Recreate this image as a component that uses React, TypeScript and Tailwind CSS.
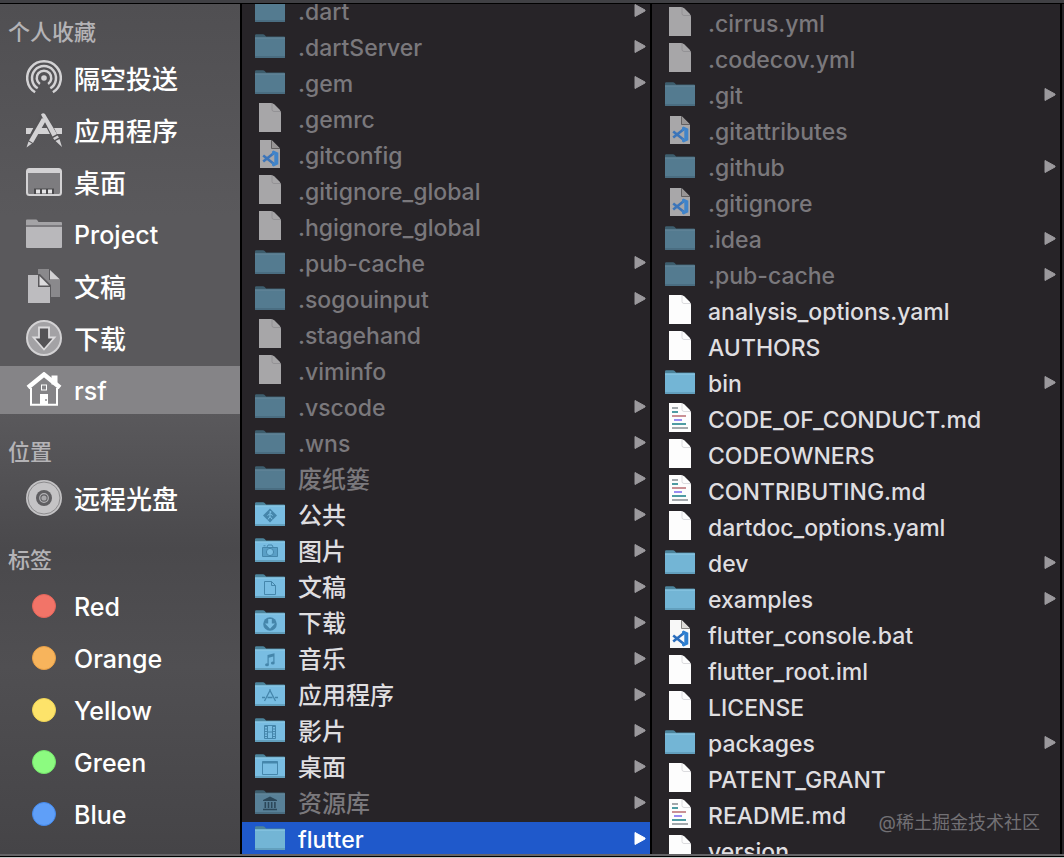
import React from "react";
import clsx from "clsx";

type IconKind = "folder" | "doc" | "code" | "markdown";
type Glyph =
  | "public"
  | "pictures"
  | "documents"
  | "downloads"
  | "music"
  | "apps"
  | "movies"
  | "desktop"
  | "library";

interface Entry {
  name: string;
  icon: IconKind;
  glyph?: Glyph;
  dim?: boolean;
  selected?: boolean;
}

const homeEntries: Entry[] = [
  { name: ".dart", icon: "folder", dim: true },
  { name: ".dartServer", icon: "folder", dim: true },
  { name: ".gem", icon: "folder", dim: true },
  { name: ".gemrc", icon: "doc", dim: true },
  { name: ".gitconfig", icon: "code", dim: true },
  { name: ".gitignore_global", icon: "doc", dim: true },
  { name: ".hgignore_global", icon: "doc", dim: true },
  { name: ".pub-cache", icon: "folder", dim: true },
  { name: ".sogouinput", icon: "folder", dim: true },
  { name: ".stagehand", icon: "doc", dim: true },
  { name: ".viminfo", icon: "doc", dim: true },
  { name: ".vscode", icon: "folder", dim: true },
  { name: ".wns", icon: "folder", dim: true },
  { name: "废纸篓", icon: "folder", dim: true },
  { name: "公共", icon: "folder", glyph: "public" },
  { name: "图片", icon: "folder", glyph: "pictures" },
  { name: "文稿", icon: "folder", glyph: "documents" },
  { name: "下载", icon: "folder", glyph: "downloads" },
  { name: "音乐", icon: "folder", glyph: "music" },
  { name: "应用程序", icon: "folder", glyph: "apps" },
  { name: "影片", icon: "folder", glyph: "movies" },
  { name: "桌面", icon: "folder", glyph: "desktop" },
  { name: "资源库", icon: "folder", glyph: "library", dim: true },
  { name: "flutter", icon: "folder", selected: true },
];

const flutterEntries: Entry[] = [
  { name: ".cirrus.yml", icon: "doc", dim: true },
  { name: ".codecov.yml", icon: "doc", dim: true },
  { name: ".git", icon: "folder", dim: true },
  { name: ".gitattributes", icon: "code", dim: true },
  { name: ".github", icon: "folder", dim: true },
  { name: ".gitignore", icon: "code", dim: true },
  { name: ".idea", icon: "folder", dim: true },
  { name: ".pub-cache", icon: "folder", dim: true },
  { name: "analysis_options.yaml", icon: "doc" },
  { name: "AUTHORS", icon: "doc" },
  { name: "bin", icon: "folder" },
  { name: "CODE_OF_CONDUCT.md", icon: "markdown" },
  { name: "CODEOWNERS", icon: "doc" },
  { name: "CONTRIBUTING.md", icon: "markdown" },
  { name: "dartdoc_options.yaml", icon: "doc" },
  { name: "dev", icon: "folder" },
  { name: "examples", icon: "folder" },
  { name: "flutter_console.bat", icon: "code" },
  { name: "flutter_root.iml", icon: "doc" },
  { name: "LICENSE", icon: "doc" },
  { name: "packages", icon: "folder" },
  { name: "PATENT_GRANT", icon: "doc" },
  { name: "README.md", icon: "markdown" },
  { name: "version", icon: "doc" },
];

const isLatin = (text: string) => /^[\x20-\x7e]+$/.test(text);

function FolderGlyph({ glyph }: { glyph: Glyph }) {
  switch (glyph) {
    case "public":
      return (
        <>
          <path d="M15 10.5 22 17.5 15 24.5 8 17.5Z" fill="#4586ab" />
          <circle cx="15.4" cy="14" r="1" fill="#7cc0e4" />
          <path
            d="M15 15.5v3l-2 3M15 18.5l2.2 2.8M12.5 17.5l2.5-1.8 2.7 1.8"
            stroke="#7cc0e4"
            fill="none"
          />
        </>
      );
    case "pictures":
      return (
        <g fill="none" stroke="#4586ab">
          <path d="M7.5 13.5h15v9h-15z" fill="#5a9fc6" />
          <path d="M12 13l1-2h4l1 2M8.5 11.8h2" />
          <circle cx="15" cy="18" r="3.6" fill="#7cc0e4" />
        </g>
      );
    case "documents":
      return (
        <path
          d="M9.5 11.5h7l4 4v9h-11zM16.5 11.5v4h4"
          fill="none"
          stroke="#4586ab"
        />
      );
    case "downloads":
      return (
        <>
          <circle cx="15" cy="18" r="6.8" fill="#4586ab" />
          <path d="M13.2 13h3.6v4.500h3.200L15 22.800 10 17.500h3.200z" fill="#7cc0e4" />
        </>
      );
    case "music":
      return (
        <g fill="#4586ab">
          <path d="M12.500 13l7-1.800v9.300h-1.200v-6l-4.600 1.200v7h-1.200z" />
          <ellipse cx="12" cy="22.800" rx="1.900" ry="1.500" />
          <ellipse cx="17.800" cy="21" rx="1.900" ry="1.500" />
        </g>
      );
    case "apps":
      return (
        <path
          d="M15.500 11.500 9.500 23M14.500 11.500l6 11.500M7 19.500h3M12.500 19.500h5M20 19.500h3"
          stroke="#4586ab"
          strokeWidth="1.300"
          fill="none"
        />
      );
    case "movies":
      return (
        <g fill="none" stroke="#4586ab">
          <path d="M9.500 11.500h11v13h-11zM12.500 11.500v13M17.500 11.500v13M12.500 18h5" />
          <path d="M11 12v12M19 12v12" strokeWidth="2" strokeDasharray="1 1.500" />
        </g>
      );
    case "desktop":
      return (
        <g fill="none" stroke="#4586ab">
          <path d="M7.500 11.500h15v13h-15z" />
          <path d="M7.500 12.500h15" strokeWidth="2" />
        </g>
      );
    case "library":
      return (
        <g fill="#2f5f79">
          <path d="M15 10.500l7 3.500v1H8v-1zM8 22.800h14v1.500H8z" />
          <path d="M9.500 16h1.600v6H9.500zM12.700 16h1.600v6h-1.600zM15.900 16h1.600v6h-1.600zM19.100 16h1.600v6h-1.600z" />
        </g>
      );
  }
}

function FolderIcon({ glyph }: { glyph?: Glyph }) {
  return (
    <>
      <path
        d="M0 27V5.500Q0 4.300 1.200 4.300H8Q9 4.300 9.700 5L10.600 6Q11 6.500 12 6.500H29Q30 6.500 30 7.500V27Z"
        fill="#4c849c"
      />
      <path
        d="M0 7.500h30V27q0 1-1 1H1q-1 0-1-1z"
        fill={glyph ? "#79bde2" : "#73b5d5"}
      />
      <path d="M0 7.500h30v1H0z" fill="#90cae6" />
      <path d="M0 26h30v1q0 1-1 1H1q-1 0-1-1z" fill="#629fbd" />
      {glyph && <FolderGlyph glyph={glyph} />}
    </>
  );
}

function DocIcon({ lined }: { lined?: boolean }) {
  return (
    <>
      <path d="M4 1h12q2 0 3.500 1.500L24.500 7.500Q26 9 26 11v19H4z" fill="#fdfdfd" />
      <path d="M17 1.500v6q0 2 2 2h6.500" fill="none" stroke="#d2d2d5" strokeWidth=".8" />
      {lined && (
        <g strokeWidth="1.800">
          <path d="M7 6h6M7 26h16" stroke="#a3a8ac" />
          <path d="M7 10h6M7 22h14" stroke="#4f9ca3" />
          <path d="M7 14h14" stroke="#c4848a" />
          <path d="M9 18h8" stroke="#8f7ff0" />
        </g>
      )}
    </>
  );
}

function CodeIcon({ dim }: { dim?: boolean }) {
  return (
    <>
      <g opacity={dim ? 0.62 : 1}>
        <path d="M5 2h11.500L25 10.500V30H5z" fill="#f8f8f8" />
        <path d="M16.500 2 25 10.500h-8.500z" fill="#dddbd8" />
        <path d="M16.500 2v8.500H25" fill="none" stroke="#7d7b78" strokeWidth=".9" />
      </g>
      <g opacity={dim ? 0.85 : 1}>
        <path
          d="M8.200 17.400 19 26M8.200 23.600 19 15"
          stroke="#2a6dbd"
          strokeWidth="2.600"
          fill="none"
        />
        <path d="M18.500 12.600 23.300 14.800v11.400l-4.800 2.200-1.500-1V24l2.300 1V16L17 17.200V13.600z" fill="#2f7fd0" />
      </g>
    </>
  );
}

function EntryIcon({ entry }: { entry: Entry }) {
  return (
    <svg
      viewBox="0 0 30 36"
      className={clsx(
        "h-9 w-[30px] shrink-0",
        entry.dim && entry.icon !== "code" && "opacity-60"
      )}
      aria-hidden="true"
    >
      {entry.icon === "folder" && <FolderIcon glyph={entry.glyph} />}
      {entry.icon === "doc" && <DocIcon />}
      {entry.icon === "markdown" && <DocIcon lined />}
      {entry.icon === "code" && <CodeIcon dim={entry.dim} />}
    </svg>
  );
}

function EntryRow({ entry }: { entry: Entry }) {
  return (
    <li>
      <button
        type="button"
        className={clsx(
          "flex h-9 w-full items-center gap-[13px] pr-1 pl-[13px] text-left font-medium",
          entry.selected && "bg-[#1f59cb] text-white",
          !entry.selected && (entry.dim ? "text-[#7a787c]" : "text-[#dfdee0]")
        )}
      >
        <EntryIcon entry={entry} />
        <span
          className={clsx(
            "flex-1 whitespace-nowrap",
            isLatin(entry.name) ? "text-[23px]" : "text-[24px]"
          )}
        >
          {entry.name}
        </span>
        {entry.icon === "folder" && (
          <svg viewBox="0 0 12 36" className="h-9 w-3 shrink-0" aria-hidden="true">
            <path
              d="M1 10.500 11 16 11 17 1 22.500Z"
              fill={entry.selected ? "#ffffff" : "#9b999d"}
              stroke={entry.selected ? "#ffffff" : "#9b999d"}
              strokeLinejoin="round"
            />
          </svg>
        )}
      </button>
    </li>
  );
}

function SidebarIcon({ children }: { children: React.ReactNode }) {
  return (
    <svg viewBox="0 0 36 36" className="size-9 shrink-0" aria-hidden="true">
      {children}
    </svg>
  );
}

const airdropIcon = (
  <g fill="none" stroke="#d3d2d4" strokeWidth="2.500">
    <path d="M9.100 32.300A16.800 16.800 0 1 1 26.900 32.300" />
    <path d="M11.700 28.300A12 12 0 1 1 24.300 28.300" />
    <path d="M13.900 24A7.300 7.300 0 1 1 22.100 24" />
    <circle cx="18" cy="18" r="2.800" fill="#d3d2d4" stroke="none" />
  </g>
);

const appsIcon = (
  <g fill="#d3d2d4">
    <path d="M0 16h8l-3 6H0zM14 16h9l3 6H11zM28 16h8v6h-5z" />
    <g fill="none" stroke="#545356" strokeWidth="6">
      <path d="M17 4 4 29M17 2l14 27" />
    </g>
    <path d="M16 6l4 2.500L7 31l-4-2.500zM2.500 29.500l3.500 2L.5 35.500z" />
    <path d="M15 2.500q2-2 4-.5L31 22l-4.500 2.500zM27 26l4.500-2.500 1.500 2-4.500 2.500zM29.500 29l4-2 2.500 8z" />
  </g>
);

const desktopIcon = (
  <>
    <rect x="1" y="5" width="34" height="26" rx="2.500" fill="#7d7c7f" stroke="#d3d2d4" strokeWidth="2" />
    <path d="M1 7.500h34" stroke="#d3d2d4" strokeWidth="3" />
    <path d="M8 24.500h20V30H8z" fill="#4b4a4d" />
    <path d="M10 25.500h4v4h-4zM16 25.500h4v4h-4zM22 25.500h4v4h-4z" fill="#e3e2e4" />
  </>
);

const folderIcon = (
  <>
    <path d="M0 10V4.500Q0 3.500 1 3.500h9q1 0 1.500 1l1 1.500H35q1 0 1 1v3z" fill="#a4a3a6" />
    <path d="M0 10.500h36V31q0 1-1 1H1q-1 0-1-1z" fill="#b9b8bb" />
    <path d="M0 9.800h36" stroke="#6e6d70" strokeWidth="1.200" />
  </>
);

const documentsIcon = (
  <>
    <path d="M12 1h11v11h11v17H25V17L14 6h-2z" fill="#8a898c" />
    <path d="M24 2v9.500h10z" fill="#d3d2d4" />
    <path d="M2 7h10v12h12v16H2z" fill="#bdbcbf" />
    <path d="M13.500 8v9.500h9.500z" fill="#dddcde" />
  </>
);

const downloadsIcon = (
  <>
    <circle cx="18" cy="18" r="17" fill="#a3a2a5" stroke="#d3d2d4" strokeWidth="2" />
    <path
      d="M13 7.500h10v10h5.500L18 29.500 7.500 17.500H13z"
      fill="#545356"
      stroke="#dcdbdd"
      strokeWidth="1.800"
    />
  </>
);

const homeIcon = (
  <>
    <path d="M25.500 3.500h6v9h-6z" fill="#ffffff" />
    <path d="M5 16v16.800h26V16" fill="none" stroke="#ffffff" strokeWidth="2" />
    <path d="M2 15.500 18 2.500l16 13" fill="none" stroke="#ffffff" strokeWidth="4.500" />
    <rect x="15.500" y="13" width="5" height="5" fill="none" stroke="#ffffff" />
    <path d="M14 22h8v11h-8z" fill="#ffffff" />
    <circle cx="20" cy="28" r="1" fill="#8a898c" />
  </>
);

const discIcon = (
  <>
    <circle cx="18" cy="18" r="18" fill="#c4c3c5" />
    <circle cx="18" cy="18" r="16" fill="none" stroke="#8c8b8d" />
    <circle cx="18" cy="18" r="8" fill="#5f5e61" />
    <circle cx="18" cy="18" r="4.300" fill="none" stroke="#b4b3b6" strokeWidth="1.200" />
    <circle cx="18" cy="18" r="2.600" fill="#a8a7aa" />
  </>
);

const tagDot = (fill: string, stroke: string) => (
  <circle cx="18" cy="18" r="11.500" fill={fill} stroke={stroke} />
);

interface Place {
  label: string;
  icon: React.ReactNode;
  selected?: boolean;
}

const sections: { title: string; places: Place[] }[] = [
  {
    title: "个人收藏",
    places: [
      { label: "隔空投送", icon: airdropIcon },
      { label: "应用程序", icon: appsIcon },
      { label: "桌面", icon: desktopIcon },
      { label: "Project", icon: folderIcon },
      { label: "文稿", icon: documentsIcon },
      { label: "下载", icon: downloadsIcon },
      { label: "rsf", icon: homeIcon, selected: true },
    ],
  },
  {
    title: "位置",
    places: [{ label: "远程光盘", icon: discIcon }],
  },
  {
    title: "标签",
    places: [
      { label: "Red", icon: tagDot("#f27468", "#e5655b") },
      { label: "Orange", icon: tagDot("#f7b45c", "#e9a046") },
      { label: "Yellow", icon: tagDot("#fde36a", "#efd455") },
      { label: "Green", icon: tagDot("#8cfb80", "#74e46b") },
      { label: "Blue", icon: tagDot("#5f9ff8", "#4489ec") },
      { label: "Purple", icon: tagDot("#c487f0", "#b173e4") },
    ],
  },
];

function Sidebar() {
  return (
    <nav className="flex w-[242px] shrink-0 flex-col gap-4 overflow-hidden border-r-2 border-black bg-[linear-gradient(#504f52,#5a595c_25%,#5a595c_48%,#4a494c_64%,#504f52_78%,#454447)] pt-1.5 text-white">
      {sections.map((section) => (
        <section key={section.title}>
          <h2 className="flex h-11 items-center pl-2 text-[22px] font-medium text-[#b4b3b6]">
            {section.title}
          </h2>
          <ul className="flex flex-col gap-1">
            {section.places.map((place) => (
              <li key={place.label}>
                <button
                  type="button"
                  className={clsx(
                    "flex h-12 w-full items-center gap-3 pl-[26px] font-medium",
                    place.selected && "bg-[#858487]"
                  )}
                >
                  <SidebarIcon>{place.icon}</SidebarIcon>
                  <span
                    className={
                      isLatin(place.label) ? "pt-1 text-[25px]" : "pt-0.5 text-[26px]"
                    }
                  >
                    {place.label}
                  </span>
                </button>
              </li>
            ))}
          </ul>
        </section>
      ))}
    </nav>
  );
}

function App() {
  return (
    <div className="relative flex h-screen flex-col overflow-hidden bg-[#272428] font-['Inter','Noto_Sans_CJK_SC',sans-serif]">
      <div className="h-1 shrink-0 border-b border-black bg-[#404044]" />
      <main className="flex min-h-0 flex-1">
        <Sidebar />
        <section className="min-w-0 flex-1 overflow-hidden border-r-2 border-black">
          <ul className="-mt-2.5">
            {homeEntries.map((entry) => (
              <EntryRow key={entry.name} entry={entry} />
            ))}
          </ul>
        </section>
        <section className="mr-0.5 min-w-0 flex-1 overflow-hidden border-r-2 border-black">
          <ul className="pt-0.5">
            {flutterEntries.map((entry) => (
              <EntryRow key={entry.name} entry={entry} />
            ))}
          </ul>
        </section>
      </main>
      <footer className="h-1 shrink-0 border-b border-[#c8c8c8] bg-black">
        <div className="h-0.5 bg-[#656467]" />
      </footer>
      <p className="absolute right-6 bottom-[22px] text-[18px] text-[#727074]">
        @稀土掘金技术社区
      </p>
    </div>
  );
}

export default App;
